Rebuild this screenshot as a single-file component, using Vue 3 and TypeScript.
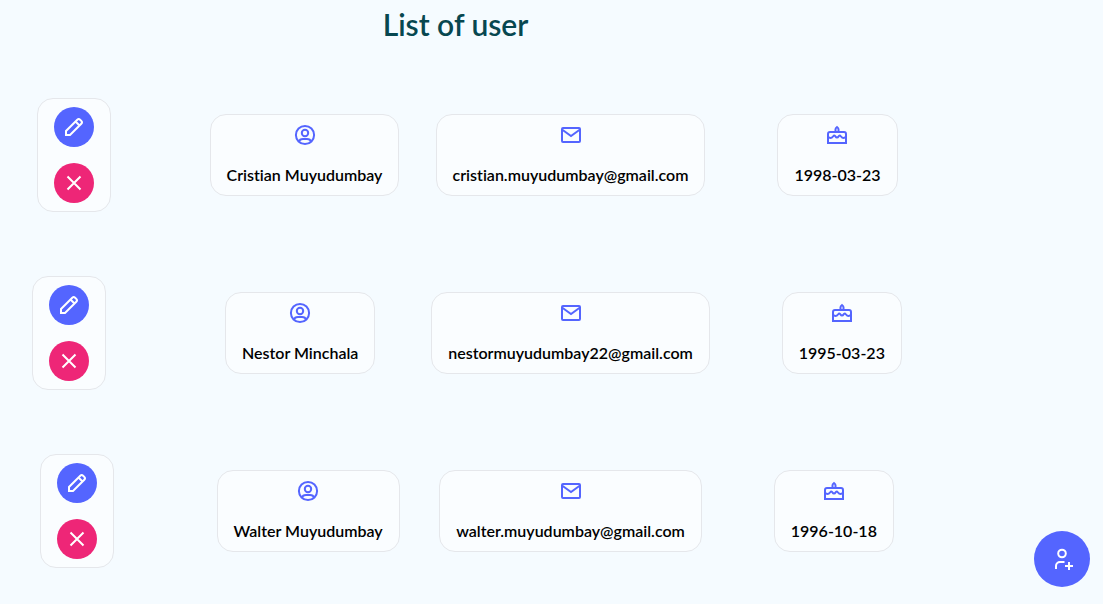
<script setup lang="ts">
import { ref } from 'vue'

interface User {
  id: number
  name: string
  email: string
  birthday: string
}

const users = ref<User[]>([
  { id: 1, name: 'Cristian Muyudumbay', email: 'cristian.muyudumbay@gmail.com', birthday: '1998-03-23' },
  { id: 2, name: 'Nestor Minchala', email: 'nestormuyudumbay22@gmail.com', birthday: '1995-03-23' },
  { id: 3, name: 'Walter Muyudumbay', email: 'walter.muyudumbay@gmail.com', birthday: '1996-10-18' },
])

function removeUser(id: number) {
  users.value = users.value.filter((user) => user.id !== id)
}
</script>

<template>
  <main class="page">
    <h1 class="title">List of user</h1>
    <ul class="users">
      <li v-for="user in users" :key="user.id" class="user">
        <div class="column">
          <div class="card actions">
            <button type="button" class="round edit" :aria-label="`Edit ${user.name}`">
              <svg class="icon" viewBox="0 0 24 24" aria-hidden="true">
                <path d="M4 20v-4L15.300 4.700a2 2 0 0 1 2.800 0l1.200 1.200a2 2 0 0 1 0 2.800L8 20zM13.500 6.500l4 4" />
              </svg>
            </button>
            <button type="button" class="round remove" :aria-label="`Delete ${user.name}`" @click="removeUser(user.id)">
              <svg class="icon" viewBox="0 0 24 24" aria-hidden="true">
                <path d="M5.500 5.500l13 13M18.500 5.500l-13 13" />
              </svg>
            </button>
          </div>
        </div>
        <div class="column name">
          <div class="card info">
            <svg class="icon" viewBox="0 0 24 24" aria-hidden="true">
              <circle cx="12" cy="12" r="9.100" />
              <circle cx="12" cy="10" r="3.200" />
              <path d="M6 18.600c.5-2 2-2.700 4-2.700h4c2 0 3.500.7 4 2.700" />
            </svg>
            <span>{{ user.name }}</span>
          </div>
        </div>
        <div class="column">
          <div class="card info">
            <svg class="icon" viewBox="0 0 24 24" aria-hidden="true">
              <rect x="3" y="5" width="18" height="14" rx="1" />
              <path d="M3 6.500l9 6.500 9-6.500" />
            </svg>
            <span>{{ user.email }}</span>
          </div>
        </div>
        <div class="column">
          <div class="card info">
            <svg class="icon" viewBox="0 0 24 24" aria-hidden="true">
              <path d="M3 20v-9a2 2 0 0 1 2-2h14a2 2 0 0 1 2 2v9z" />
              <path d="M3 13.500c1.500 2 3.500 2 5 0 1-1.300 1.800-1.300 2.500 0 .7 1.300 2.300 1.300 3 0 .7-1.300 1.500-1.300 2.500 0 1.500 2 3.500 2 5 0" />
              <path d="M10.500 9V6.200C10.500 5.200 11.200 4.500 12 4c.8.5 1.500 1.200 1.500 2.200V9" />
            </svg>
            <span>{{ user.birthday }}</span>
          </div>
        </div>
      </li>
    </ul>
    <button type="button" class="add" aria-label="Add user">
      <svg class="icon" viewBox="0 0 24 24" aria-hidden="true">
        <circle cx="12" cy="6.500" r="3.800" />
        <path d="M6 22v-3a4 4 0 0 1 4-4h4.500M15 19h8M19 15v8" />
      </svg>
    </button>
  </main>
</template>

<style>
body {
  margin: 0;
  background: #f5fbff;
}
</style>

<style scoped>
.page {
  box-sizing: border-box;
  min-height: 100vh;
  padding: 0 192px 36px 0;
  font-family: Lato, "Liberation Sans", sans-serif;
  font-size: 16px;
  line-height: 24px;
  font-variant-ligatures: none;
  color: #000;
}

.title {
  margin: 0;
  padding: 0 0 2px;
  font-size: 30px;
  font-weight: 600;
  line-height: 48px;
  text-align: center;
  color: #074750;
}

.users {
  display: flex;
  flex-direction: column;
  gap: 64px;
  margin: 48px 0 0;
  padding: 0;
  list-style: none;
}

.user {
  display: flex;
  align-items: center;
  justify-content: center;
  gap: 32px;
}

.column {
  display: flex;
  flex: none;
  justify-content: center;
  min-width: 200px;
}

.column.name {
  min-width: 198px;
}

.card {
  display: flex;
  flex-direction: column;
  align-items: center;
  gap: 16px;
  padding: 8px 16px;
  border: 1px solid #e5e7eb;
  border-radius: 16px;
  background: #fafdff;
}

.info {
  font-weight: 600;
  color: #000;
}

.info .icon {
  color: #5465ff;
}

.icon {
  display: block;
  width: 24px;
  height: 24px;
  fill: none;
  stroke: currentColor;
  stroke-width: 2;
}

.round,
.add {
  display: flex;
  align-items: center;
  justify-content: center;
  padding: 0;
  border: 0;
  border-radius: 50%;
  background: #5465ff;
  color: #fff;
  cursor: pointer;
}

.round {
  width: 40px;
  height: 40px;
}

.remove {
  background: #ee2677;
}

.add {
  position: fixed;
  right: 13px;
  bottom: 17px;
  width: 56px;
  height: 56px;
}
</style>
